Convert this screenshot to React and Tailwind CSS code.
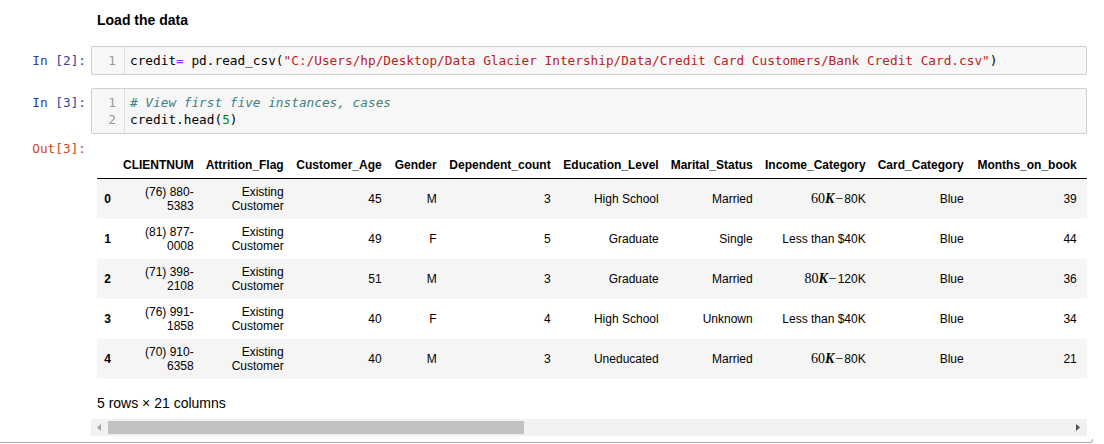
import React from 'react';

// celdas de Income con el "$" que MathJax convirtió en fórmula
function MathIncome({ a, b }) {
  return (
    <span>
      <span className="font-['Liberation_Serif',serif] text-[14px]">
        {a}
        <span className="italic font-bold">K</span>
        <span className="px-[1px]">−</span>
      </span>
      {b}
    </span>
  );
}

const rows = [
  { id: 0, client: ['(76) 880-', '5383'], age: 45, gender: 'M', dep: 3, edu: 'High School', marital: 'Married', income: <MathIncome a="60" b="80K" />, card: 'Blue', months: 39 },
  { id: 1, client: ['(81) 877-', '0008'], age: 49, gender: 'F', dep: 5, edu: 'Graduate', marital: 'Single', income: 'Less than $40K', card: 'Blue', months: 44 },
  { id: 2, client: ['(71) 398-', '2108'], age: 51, gender: 'M', dep: 3, edu: 'Graduate', marital: 'Married', income: <MathIncome a="80" b="120K" />, card: 'Blue', months: 36 },
  { id: 3, client: ['(76) 991-', '1858'], age: 40, gender: 'F', dep: 4, edu: 'High School', marital: 'Unknown', income: 'Less than $40K', card: 'Blue', months: 34 },
  { id: 4, client: ['(70) 910-', '6358'], age: 40, gender: 'M', dep: 3, edu: 'Uneducated', marital: 'Married', income: <MathIncome a="60" b="80K" />, card: 'Blue', months: 21 },
];

// anchos medidos de cada columna
const headers = [
  { label: 'CLIENTNUM', w: 'w-[82px]' },
  { label: 'Attrition_Flag', w: 'w-[89px]' },
  { label: 'Customer_Age', w: 'w-[98px]' },
  { label: 'Gender', w: 'w-[55px]' },
  { label: 'Dependent_count', w: 'w-[114px]' },
  { label: 'Education_Level', w: 'w-[108px]' },
  { label: 'Marital_Status', w: 'w-[94px]' },
  { label: 'Income_Category', w: 'w-[113px]' },
  { label: 'Card_Category', w: 'w-[98px]' },
  { label: 'Months_on_book', w: 'w-[113px]' },
];

const mono = "font-['DejaVu_Sans_Mono',monospace] text-[12.75px] leading-[17px]";

function Prompt({ children, out }) {
  return (
    <div className={`w-[91px] shrink-0 pr-[5px] text-right ${mono} ${out ? 'text-[#D84315]' : 'text-[#303F9F]'}`}>
      {children}
    </div>
  );
}

function CodeCell({ n, lines }) {
  return (
    <div className="flex">
      <div className="pt-[6px]">
        <Prompt>In [{n}]:</Prompt>
      </div>
      <div className={`w-[996px] flex border border-[#cfcfcf] rounded-[2px] bg-[#f7f7f7] ${mono}`}>
        <div className="w-[33px] shrink-0 border-r border-[#dddddd] py-[5px] pr-[8px] text-right text-[#999999]">
          {lines.map((_, i) => (
            <div key={i}>{i + 1}</div>
          ))}
        </div>
        <div className="py-[5px] pl-[5px] text-black whitespace-pre">
          {lines.map((l, i) => (
            <div key={i}>{l}</div>
          ))}
        </div>
      </div>
    </div>
  );
}

export default function App() {
  const td = 'px-[6px] py-[6px] text-right align-middle whitespace-nowrap';

  return (
    <div className="w-[1104px] h-[444px] overflow-hidden bg-white text-black font-['Liberation_Sans',Arial,sans-serif]">
      {/* celda markdown */}
      <div className="pl-[97px] pt-[10px] text-[14px] leading-[20px] font-bold">Load the data</div>

      <div className="mt-[16px]">
        <CodeCell
          n={2}
          lines={[
            <>
              credit<span className="text-[#AA22FF]">=</span> pd.read_csv(
              <span className="text-[#BA2121]">"C:/Users/hp/Desktop/Data Glacier Intership/Data/Credit Card Customers/Bank Credit Card.csv"</span>)
            </>,
          ]}
        />
      </div>

      <div className="mt-[13px]">
        <CodeCell
          n={3}
          lines={[
            <span className="italic text-[#408080]"># View first five instances, cases</span>,
            <>
              credit.head(<span className="text-[#008800]">5</span>)
            </>,
          ]}
        />
      </div>

      {/* salida */}
      <div className="flex mt-[6px]">
        <Prompt out>Out[3]:</Prompt>
        <div className="w-[996px]">
          <div className="pl-[6px] pt-[12px] w-[996px] overflow-hidden">
            <table className="w-max border-collapse text-[12px] leading-[14px]">
              <thead>
                <tr className="border-b border-black">
                  <th className={`${td} w-[20px] align-bottom`}></th>
                  {headers.map((h) => (
                    <th key={h.label} className={`${td} ${h.w} align-bottom font-bold`}>{h.label}</th>
                  ))}
                  <th className="w-[200px]"></th>
                </tr>
              </thead>
              <tbody>
                {rows.map((r) => (
                  <tr key={r.id} className={r.id % 2 === 0 ? 'bg-[#f5f5f5]' : 'bg-white'}>
                    <th className={`${td} font-bold`}>{r.id}</th>
                    <td className={td}>
                      {r.client[0]}
                      <br />
                      {r.client[1]}
                    </td>
                    <td className={td}>
                      Existing
                      <br />
                      Customer
                    </td>
                    <td className={td}>{r.age}</td>
                    <td className={td}>{r.gender}</td>
                    <td className={td}>{r.dep}</td>
                    <td className={td}>{r.edu}</td>
                    <td className={td}>{r.marital}</td>
                    <td className={td}>{r.income}</td>
                    <td className={td}>{r.card}</td>
                    <td className={td}>{r.months}</td>
                    <td className="w-[200px]"></td>
                  </tr>
                ))}
              </tbody>
            </table>
          </div>

          <p className="pl-[6px] mt-[16px] text-[14px] leading-[16px]">5 rows × 21 columns</p>

          {/* barra de scroll horizontal */}
          <div className="mt-[8px] h-[17px] w-[996px] bg-[#f1f1f1] flex items-center">
            <svg width="17" height="17" viewBox="0 0 17 17" className="shrink-0">
              <polygon points="10,5 10,12 6,8.5" fill="#a3a3a3" />
            </svg>
            <div className="h-[13px] w-[416px] bg-[#c1c1c1]"></div>
            <div className="flex-1"></div>
            <svg width="17" height="17" viewBox="0 0 17 17" className="shrink-0">
              <polygon points="6,5 6,12 10,8.5" fill="#505050" />
            </svg>
          </div>
        </div>
      </div>

      <div className="mt-[3px] w-[1093px] h-[4px] border-b border-r border-[#ababab] rounded-br-[3px]"></div>
    </div>
  );
}
